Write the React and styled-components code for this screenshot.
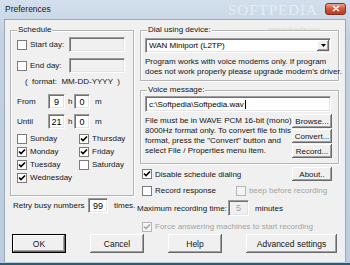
import React from 'react';
import styled, { createGlobalStyle } from 'styled-components';

const GlobalStyle = createGlobalStyle`
  html, body {
    margin: 0;
    padding: 0;
  }
  body {
    font-family: "Liberation Sans", Arial, sans-serif;
    font-size: 8px;
    color: #141414;
  }
`;

const Window = styled.div`
  position: relative;
  width: 350px;
  height: 265px;
  box-sizing: border-box;
  display: flex;
  flex-direction: column;
  background: linear-gradient(to bottom, #d3dfec, #c2d2e3 40px, #bccde0);
  border-bottom: 2px solid #2a5e70;
  overflow: hidden;
`;

const TitleBar = styled.div`
  height: 19px;
  display: flex;
  align-items: center;
  justify-content: space-between;
  padding: 0 4px 0 5px;
  flex-shrink: 0;
`;

const Title = styled.span`
  font-size: 8.5px;
  color: #1c1c1c;
  margin-top: -1px;
`;

const CloseButton = styled.div`
  width: 19px;
  height: 10px;
  margin-top: -2px;
  border-radius: 3px;
  border: 1px solid #80311f;
  background: linear-gradient(to bottom, #eaa593, #d0533a 50%, #b93c24);
  display: flex;
  align-items: center;
  justify-content: center;
`;

const Watermark = styled.div`
  position: absolute;
  top: 2px;
  left: 228px;
  font-family: "Liberation Serif", serif;
  font-size: 15px;
  letter-spacing: 1px;
  color: rgba(255, 255, 255, 0.5);
  pointer-events: none;
`;

const WatermarkUrl = styled.div`
  position: absolute;
  top: 26px;
  left: 268px;
  font-size: 6px;
  color: rgba(200, 200, 200, 0.7);
  pointer-events: none;
`;

const Client = styled.div`
  flex: 1;
  margin: 0 4px 1px 4px;
  background: #f0f0f0;
  border: 1px solid #9aa9ba;
  border-bottom: none;
  box-sizing: border-box;
  padding: 10px 0 0 5px;
  display: flex;
  flex-direction: column;
`;

const Columns = styled.div`
  display: flex;
  gap: 6px;
`;

const LeftCol = styled.div`
  width: 124px;
  display: flex;
  flex-direction: column;
`;

const RightCol = styled.div`
  width: 199px;
  display: flex;
  flex-direction: column;
`;

const Group = styled.div`
  position: relative;
  box-sizing: border-box;
  height: ${p => p.$h}px;
  margin-top: ${p => p.$mt || 0}px;
  border: 1px solid #b4b4b4;
  box-shadow: inset 1px 1px 0 #fff, 1px 1px 0 #fff;
  padding: ${p => p.$pad};
  display: flex;
  flex-direction: column;
`;

const GroupLabel = styled.span`
  position: absolute;
  top: -7px;
  left: 6px;
  padding: 0 1px;
  background: #f0f0f0;
  line-height: 12px;
`;

const Row = styled.div`
  display: flex;
  align-items: center;
  height: ${p => p.$h || 15}px;
  margin-top: ${p => p.$mt || 0}px;
  margin-left: ${p => p.$ml || 0}px;
  white-space: pre;
`;

const Box = styled.span`
  width: 10px;
  height: 10px;
  box-sizing: border-box;
  flex-shrink: 0;
  border: 1px solid ${p => (p.$disabled ? '#b5b5b5' : '#7b7b7b')};
  background: ${p => (p.$disabled ? '#f4f4f4' : '#fff')};
  display: flex;
  align-items: center;
  justify-content: center;
`;

const CheckText = styled.span`
  margin-left: 3px;
  color: ${p => (p.$disabled ? '#a3a3a3' : 'inherit')};
`;

const Check = ({ checked, disabled, children }) => (
  <>
    <Box $disabled={disabled}>
      {checked && (
        <svg width="8" height="8" viewBox="0 0 8 8">
          <path d="M1 3.5 L3 5.5 L7 1.5" fill="none" stroke={disabled ? '#a8a8a8' : '#000'} strokeWidth="1.6" />
        </svg>
      )}
    </Box>
    <CheckText $disabled={disabled}>{children}</CheckText>
  </>
);

const Field = styled.div`
  box-sizing: border-box;
  width: ${p => p.$w}px;
  height: ${p => p.$h || 15}px;
  flex-shrink: 0;
  margin-left: ${p => (p.$push ? 'auto' : '0')};
  border: 1px solid;
  border-color: #9c9c9c #fff #fff #9c9c9c;
  box-shadow: inset 1px 1px 0 #707070, inset -1px -1px 0 #e4e4e4;
  background: ${p => (p.$disabled ? '#f0f0f0' : '#fff')};
  color: ${p => (p.$disabled ? '#a0a0a0' : '#000')};
  display: flex;
  align-items: center;
  justify-content: ${p => (p.$center ? 'center' : 'flex-start')};
  padding: ${p => (p.$center ? '0' : '0 3px')};
  font-size: ${p => (p.$center ? 9 : 8)}px;
  white-space: nowrap;
  overflow: hidden;
`;

const Caret = styled.span`
  display: inline-block;
  width: 1px;
  height: 9px;
  background: #000;
  margin-left: 1px;
`;

const Text = styled.span`
  width: ${p => (p.$w ? `${p.$w}px` : 'auto')};
  margin-left: ${p => p.$ml || 0}px;
  flex-shrink: 0;
  color: ${p => (p.$disabled ? '#a0a0a0' : 'inherit')};
`;

const Select = styled(Field)`
  padding: 0 1px 0 3px;
  justify-content: space-between;
`;

const DropButton = styled.span`
  width: 12px;
  height: 11px;
  box-sizing: border-box;
  background: #f0f0f0;
  box-shadow: inset -1px -1px 0 #696969, inset 1px 1px 0 #fff, inset -2px -2px 0 #a0a0a0;
  display: flex;
  align-items: center;
  justify-content: center;
`;

const DayGrid = styled.div`
  display: grid;
  grid-template-columns: 62px 1fr;
  grid-auto-rows: 13px;
  margin-top: 3px;
`;

const Day = styled.div`
  display: flex;
  align-items: center;
`;

const Paragraph = styled.div`
  line-height: 10px;
  margin-top: ${p => p.$mt || 0}px;
  white-space: pre;
`;

const VoiceBody = styled.div`
  display: flex;
  justify-content: space-between;
  margin-top: 2px;
  width: 187px;
`;

const SideButtons = styled.div`
  display: flex;
  flex-direction: column;
  gap: 1px;
`;

const Spacer = styled.span`
  width: ${p => p.$w}px;
  flex-shrink: 0;
`;

const Button = styled.button`
  font-family: inherit;
  font-size: ${p => (p.$big ? 8.5 : 8)}px;
  color: #141414;
  box-sizing: border-box;
  width: ${p => p.$w}px;
  height: ${p => p.$h}px;
  margin-left: ${p => (p.$push ? 'auto' : '0')};
  padding: 0;
  background: #f0f0f0;
  border: ${p => (p.$default ? '1px solid #000' : 'none')};
  box-shadow: inset -1px -1px 0 #696969, inset 1px 1px 0 #fff, inset -2px -2px 0 #a0a0a0;
  display: flex;
  align-items: center;
  justify-content: center;
  flex-shrink: 0;
`;

const Footer = styled.div`
  display: flex;
  gap: 24px;
  padding-left: 2px;
  margin-top: 1px;
`;

export default function App() {
  return (
    <>
      <GlobalStyle />
      <Window>
        <TitleBar>
          <Title>Preferences</Title>
          <CloseButton>
            <svg width="8" height="7" viewBox="0 0 8 7">
              <path d="M1 1 L7 6 M7 1 L1 6" stroke="#fff" strokeWidth="1.6" />
            </svg>
          </CloseButton>
        </TitleBar>
        <Watermark>SOFTPEDIA</Watermark>
        <WatermarkUrl>www.softpedia.com</WatermarkUrl>
        <Client>
          <Columns>
            <LeftCol>
              <Group $h={166} $pad="6px 8px 0 6px">
                <GroupLabel>Schedule</GroupLabel>
                <Row>
                  <Check>Start day:</Check>
                  <Field $w={56} $disabled $push />
                </Row>
                <Row $mt={6}>
                  <Check>End day:</Check>
                  <Field $w={56} $disabled $push />
                </Row>
                <Row $h={10} $mt={3} $ml={8}>
                  <Text>{'(  format:  MM-DD-YYYY  )'}</Text>
                </Row>
                <Row $mt={8}>
                  <Text $w={31}>From</Text>
                  <Field $w={17} $center>9</Field>
                  <Text $ml={3} $w={6}>h</Text>
                  <Field $w={16} $center>0</Field>
                  <Text $ml={5}>m</Text>
                </Row>
                <Row $mt={5}>
                  <Text $w={31}>Until</Text>
                  <Field $w={17} $center>21</Field>
                  <Text $ml={3} $w={6}>h</Text>
                  <Field $w={16} $center>0</Field>
                  <Text $ml={5}>m</Text>
                </Row>
                <DayGrid>
                  <Day><Check>Sunday</Check></Day>
                  <Day><Check checked>Thursday</Check></Day>
                  <Day><Check checked>Monday</Check></Day>
                  <Day><Check checked>Friday</Check></Day>
                  <Day><Check checked>Tuesday</Check></Day>
                  <Day><Check>Saturday</Check></Day>
                  <Day><Check checked>Wednesday</Check></Day>
                </DayGrid>
              </Group>
              <Row $mt={2} $ml={3}>
                <Text $w={75}>Retry busy numbers</Text>
                <Field $w={20} $center>99</Field>
                <Text $ml={6}>times.</Text>
              </Row>
            </LeftCol>
            <RightCol>
              <Group $h={51} $pad="7px 0 0 4px">
                <GroupLabel>Dial using device:</GroupLabel>
                <Select $w={186}>
                  <span>WAN Miniport (L2TP)</span>
                  <DropButton>
                    <svg width="5" height="3" viewBox="0 0 5 3">
                      <path d="M0 0 H5 L2.5 3 Z" fill="#000" />
                    </svg>
                  </DropButton>
                </Select>
                <Paragraph $mt={4}>
                  {'Program works with voice modems only. If program\ndoes not work properly please upgrade modem\u2019s driver.'}
                </Paragraph>
              </Group>
              <Group $h={74} $mt={9} $pad="5px 0 0 4px">
                <GroupLabel>Voice message:</GroupLabel>
                <Field $w={186} $h={16}>
                  c:\Softpedia\Softpedia.wav<Caret />
                </Field>
                <VoiceBody>
                  <Paragraph $mt={2}>
                    {'File must be in WAVE PCM 16-bit (mono)\n8000Hz format only. To convert file to this\nformat, press the "Convert" button and\nselect File / Properties menu item.'}
                  </Paragraph>
                  <SideButtons>
                    <Button $w={40} $h={14}>Browse...</Button>
                    <Button $w={40} $h={14}>Convert...</Button>
                    <Button $w={40} $h={14}>Record...</Button>
                  </SideButtons>
                </VoiceBody>
              </Group>
              <Row $h={14} $mt={3} $ml={2} style={{ width: 190 }}>
                <Check checked>Disable schedule dialing</Check>
                <Button $w={40} $h={14} $push>About..</Button>
              </Row>
              <Row $h={13} $mt={3} $ml={2}>
                <Check>Record response</Check>
                <Spacer $w={20} />
                <Check disabled>beep before recording</Check>
              </Row>
              <Row $h={16} $mt={3} $ml={-3}>
                <Text $w={91}>Maximum recording time:</Text>
                <Field $w={21} $h={16} $center $disabled>5</Field>
                <Text $ml={6}>minutes</Text>
              </Row>
              <Row $h={13} $mt={4} $ml={2}>
                <Check checked disabled>Force answering machines to start recording</Check>
              </Row>
            </RightCol>
          </Columns>
          <Footer>
            <Button $w={54} $h={19} $big $default>OK</Button>
            <Button $w={54} $h={19} $big>Cancel</Button>
            <Button $w={54} $h={19} $big>Help</Button>
            <Button $w={91} $h={19} $big>Advanced settings</Button>
          </Footer>
        </Client>
      </Window>
    </>
  );
}
